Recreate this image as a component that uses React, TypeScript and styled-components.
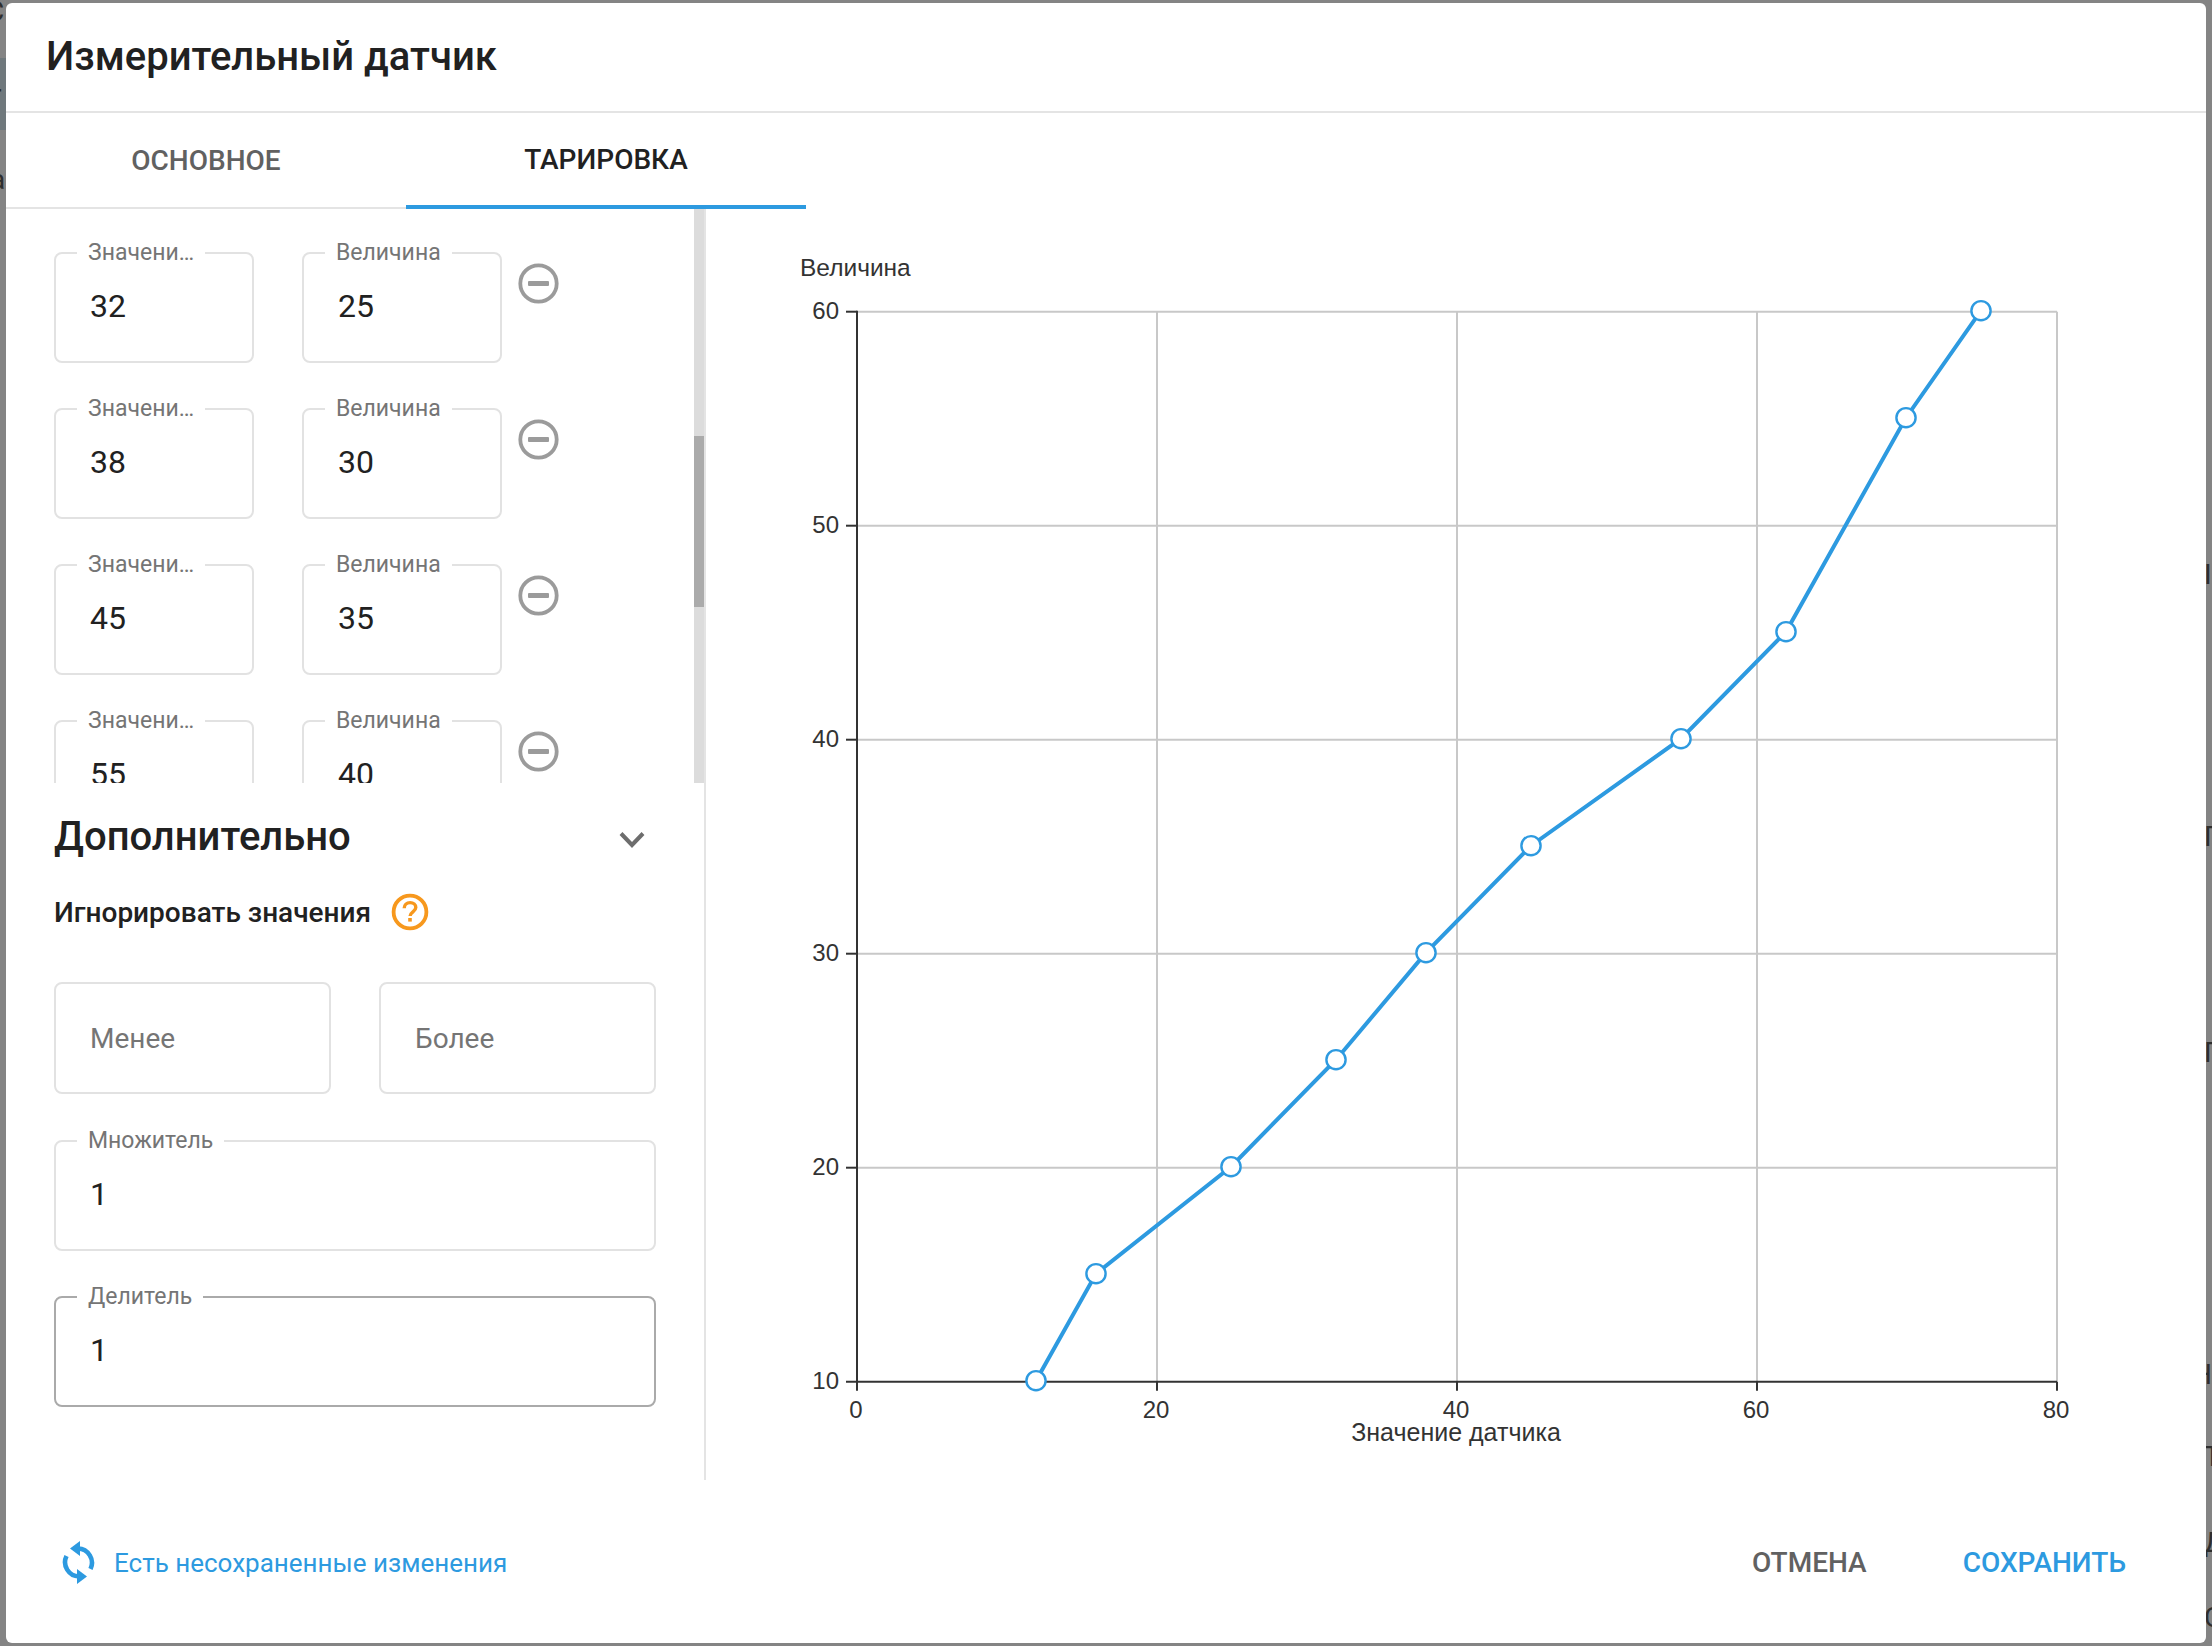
import React from "react";
import styled, { createGlobalStyle } from "styled-components";

const Global = createGlobalStyle`
  html, body { margin: 0; padding: 0; background: #858585; }
  * { box-sizing: border-box; }
  body { font-family: Roboto, "Liberation Sans", sans-serif; }
`;

const Page = styled.div`
  position: relative;
  width: 2212px;
  height: 1646px;
  padding: 3px 6px 3px 6px;
  background: #848484;
  overflow: hidden;
`;
const LeftBand = styled.div`
  position: absolute;
  left: 0;
  top: 58px;
  width: 6px;
  height: 72px;
  background: #6f787c;
`;
const BackGlyph = styled.span<{ $x: number; $y: number }>`
  position: absolute;
  left: ${(p) => p.$x}px;
  top: ${(p) => p.$y}px;
  font-size: 28px;
  line-height: 32px;
  color: #2e2e2e;
`;
const Modal = styled.div`
  position: relative;
  width: 100%;
  height: 100%;
  background: #fff;
  border-radius: 6px;
  display: flex;
  flex-direction: column;
`;
const Header = styled.div`
  height: 110px;
  flex: none;
  display: flex;
  align-items: center;
  padding: 0 0 2px 40px;
  border-bottom: 2px solid #e4e4e4;
`;
const Title = styled.h1`
  margin: 0;
  font-size: 40px;
  font-weight: 500;
  color: #212121;
`;
const Tabs = styled.div`
  height: 96px;
  flex: none;
  display: flex;
  align-items: stretch;
`;
const TabsLeft = styled.div`
  display: flex;
  width: 800px;
  border-bottom: 2px solid #e4e4e4;
`;
const Tab = styled.div<{ $active?: boolean }>`
  width: 400px;
  display: flex;
  align-items: center;
  justify-content: center;
  font-size: 28px;
  font-weight: 500;
  color: ${(p) => (p.$active ? "#212121" : "#616161")};
  margin-bottom: ${(p) => (p.$active ? "-2px" : "0")};
  border-bottom: ${(p) => (p.$active ? "4px solid #2d9ae0" : "none")};
`;
const Body = styled.div`
  flex: none;
  height: 1271px;
  display: flex;
`;
const LeftPanel = styled.div`
  width: 700px;
  height: 1271px;
  flex: none;
  border-right: 2px solid #e4e4e4;
  display: flex;
  flex-direction: column;
`;
const ScrollArea = styled.div`
  height: 574px;
  flex: none;
  position: relative;
  overflow: hidden;
  padding: 32px 0 0 48px;
`;
const Track = styled.div`
  position: absolute;
  top: 0;
  right: 0;
  width: 10px;
  height: 100%;
  background: #dcdcdc;
`;
const Thumb = styled.div`
  position: absolute;
  top: 227px;
  left: 0;
  width: 100%;
  height: 171px;
  background: #ababab;
`;
const Row = styled.div`
  display: flex;
  align-items: flex-start;
  gap: 48px;
  height: 156px;
  flex: none;
`;
const FieldBox = styled.fieldset<{ $w?: number; $dark?: boolean }>`
  margin: 0;
  width: ${(p) => (p.$w ? `${p.$w}px` : "100%")};
  height: 122px;
  padding: 0 0 0 34px;
  border: 2px solid ${(p) => (p.$dark ? "#aaaaaa" : "#e2e2e2")};
  border-radius: 8px;
  display: block;
  flex: none;
`;
const Legend = styled.legend`
  margin-left: -13px;
  padding: 0 11px;
  font-size: 23px;
  line-height: 24px;
  color: #757575;
  height: 24px;
`;
const Value = styled.div`
  font-size: 32px;
  line-height: 38px;
  color: #212121;
  margin-top: 22px;
`;
const RemoveBtn = styled.div`
  margin: 22px 0 0 -32px;
  width: 41px;
  height: 41px;
  flex: none;
  display: flex;
`;
const Extra = styled.div`
  flex: 1;
  padding: 0 0 0 48px;
`;
const ExtraHead = styled.div`
  display: flex;
  align-items: center;
  justify-content: space-between;
  height: 64px;
  margin-top: 21px;
  width: 602px;
`;
const H2 = styled.h2`
  margin: 0;
  font-size: 40px;
  font-weight: 500;
  color: #212121;
`;
const Chevron = styled.div`
  width: 30px;
  height: 24px;
  margin: 10px 9px 0 0;
  display: flex;
`;
const IgnoreRow = styled.div`
  display: flex;
  align-items: center;
  gap: 20px;
  height: 40px;
  margin-top: 24px;
`;
const IgnoreLabel = styled.div`
  font-size: 28px;
  font-weight: 500;
  color: #212121;
`;
const Pair = styled.div`
  display: flex;
  gap: 48px;
  margin-top: 50px;
  width: 602px;
`;
const PlainBox = styled.div`
  width: 277px;
  height: 112px;
  border: 2px solid #e2e2e2;
  border-radius: 8px;
  padding-left: 34px;
  display: flex;
  align-items: center;
  font-size: 28px;
  color: #757575;
`;
const FullField = styled.div<{ $top: number }>`
  width: 602px;
  margin-top: ${(p) => p.$top}px;
`;
const ChartPanel = styled.div`
  flex: 1;
  min-width: 0;
`;
const Footer = styled.div`
  flex: 1;
  display: flex;
  align-items: center;
  justify-content: space-between;
  padding: 2px 80px 0 56px;
`;
const Notice = styled.div`
  display: flex;
  align-items: center;
  gap: 19px;
  font-size: 26px;
  color: #2d9ae0;
`;
const Actions = styled.div`
  display: flex;
  align-items: center;
  gap: 96px;
`;
const Action = styled.div<{ $primary?: boolean }>`
  font-size: 28px;
  font-weight: 500;
  color: ${(p) => (p.$primary ? "#2d9ae0" : "#616161")};
`;
const ChartSvg = styled.svg`
  display: block;
  font-family: "Liberation Sans", Arial, sans-serif;
  font-size: 24px;
  fill: #333;
`;

const MinusCircle = () => (
  <svg width="41" height="41" viewBox="0 0 41 41" fill="none">
    <circle cx="20.5" cy="20.5" r="18.2" stroke="#9b9b9b" strokeWidth="3.8" />
    <rect x="10" y="18" width="21" height="5" rx="1" fill="#9b9b9b" />
  </svg>
);

const Help = () => (
  <svg width="38" height="38" viewBox="0 0 38 38" fill="none">
    <circle cx="19" cy="19" r="16.4" stroke="#f7981d" strokeWidth="3.8" />
    <path d="M13.2 15.2c0-3.4 2.5-5.6 5.9-5.6s5.7 2 5.7 4.9c0 4.2-5.7 4.4-5.7 8.6" stroke="#f7981d" strokeWidth="3.4" />
    <rect x="17.2" y="25" width="3.6" height="3.6" fill="#f7981d" />
  </svg>
);

const Sync = () => (
  <svg width="33" height="43" viewBox="0 0 33 43" fill="none">
    <path d="M16 7.5A14.3 14.3 0 0 1 28.5 28" stroke="#2d9ae0" strokeWidth="4.6" />
    <path d="M8 7.5L18 0v15z" fill="#2d9ae0" />
    <path d="M17 35.5A14.3 14.3 0 0 1 4.5 15" stroke="#2d9ae0" strokeWidth="4.6" />
    <path d="M25 35.5L15 28v15z" fill="#2d9ae0" />
  </svg>
);

const points: [number, number][] = [
  [12, 10], [16, 15], [25, 20], [32, 25], [38, 30], [45, 35], [55, 40], [62, 45], [70, 55], [75, 60],
];
const OX = 857 - 706;
const OY = 1381.7 - 209;
const sx = (v: number) => OX + v * 15;
const sy = (v: number) => OY - (v - 10) * 21.4;

const Chart = () => (
  <ChartSvg width="1500" height="1271" viewBox="0 0 1500 1271">
    {[20, 30, 40, 50, 60].map((v) => (
      <line key={v} x1={sx(0)} x2={sx(80)} y1={sy(v)} y2={sy(v)} stroke="#c8c8c8" strokeWidth="2" />
    ))}
    {[20, 40, 60, 80].map((v) => (
      <line key={v} x1={sx(v)} x2={sx(v)} y1={sy(60)} y2={sy(10)} stroke="#c8c8c8" strokeWidth="2" />
    ))}
    <line x1={sx(0)} x2={sx(0)} y1={sy(60) - 1} y2={sy(10) + 9} stroke="#333" strokeWidth="2" />
    <line x1={sx(0) - 11} x2={sx(80)} y1={sy(10)} y2={sy(10)} stroke="#333" strokeWidth="2" />
    {[20, 30, 40, 50, 60].map((v) => (
      <line key={v} x1={sx(0) - 11} x2={sx(0)} y1={sy(v)} y2={sy(v)} stroke="#333" strokeWidth="2" />
    ))}
    {[20, 40, 60, 80].map((v) => (
      <line key={v} x1={sx(v)} x2={sx(v)} y1={sy(10)} y2={sy(10) + 9} stroke="#333" strokeWidth="2" />
    ))}
    {[10, 20, 30, 40, 50, 60].map((v) => (
      <text key={v} x={sx(0) - 18} y={sy(v) + 7} textAnchor="end">{v}</text>
    ))}
    {[0, 20, 40, 60, 80].map((v) => (
      <text key={v} x={sx(v) - 1} y={sy(10) + 36} textAnchor="middle">{v}</text>
    ))}
    <text x={94} y={67} fontSize="24.5">Величина</text>
    <text x={sx(40) - 1} y={1232} textAnchor="middle" fontSize="25">Значение датчика</text>
    <polyline
      fill="none"
      stroke="#2d9ae0"
      strokeWidth="4"
      points={points.map(([x, y]) => `${sx(x) - 1},${sy(y) - 1}`).join(" ")}
    />
    {points.map(([x, y]) => (
      <circle key={x} cx={sx(x) - 1} cy={sy(y) - 1} r="9.6" fill="#fff" stroke="#2d9ae0" strokeWidth="2.4" />
    ))}
  </ChartSvg>
);

const rows = [
  ["32", "25"],
  ["38", "30"],
  ["45", "35"],
  ["55", "40"],
];

const backGlyphs: [string, number, number][] = [
  ["C", -14, -4],
  ["r", -8, 79],
  ["а", -10, 164],
  ["I", 2204, 559],
  ["П", 2204, 821],
  ["Г", 2204, 1037],
  ["Н", 2192, 1359],
  ["Т", 2204, 1441],
  ["Д", 2204, 1527],
  ["С", 2204, 1602],
];

const Field = ({ label, value, w, dark }: { label: string; value: string; w?: number; dark?: boolean }) => (
  <FieldBox $w={w} $dark={dark}>
    <Legend>{label}</Legend>
    <Value>{value}</Value>
  </FieldBox>
);

export default function App() {
  return (
    <Page>
      <Global />
      <LeftBand />
      {backGlyphs.map(([g, x, y]) => (
        <BackGlyph key={y} $x={x} $y={y}>{g}</BackGlyph>
      ))}
      <Modal>
        <Header>
          <Title>Измерительный датчик</Title>
        </Header>
        <Tabs>
          <TabsLeft>
            <Tab>ОСНОВНОЕ</Tab>
            <Tab $active>ТАРИРОВКА</Tab>
          </TabsLeft>
        </Tabs>
        <Body>
          <LeftPanel>
            <ScrollArea>
              {rows.map(([a, b]) => (
                <Row key={a}>
                  <Field label="Значени…" value={a} w={200} />
                  <Field label="Величина" value={b} w={200} />
                  <RemoveBtn>
                    <MinusCircle />
                  </RemoveBtn>
                </Row>
              ))}
              <Track>
                <Thumb />
              </Track>
            </ScrollArea>
            <Extra>
              <ExtraHead>
                <H2>Дополнительно</H2>
                <Chevron>
                  <svg width="30" height="24" viewBox="0 0 30 24" fill="none">
                    <path d="M4 4.5l11 11.5L26 4.5" stroke="#6d6d6d" strokeWidth="4" />
                  </svg>
                </Chevron>
              </ExtraHead>
              <IgnoreRow>
                <IgnoreLabel>Игнорировать значения</IgnoreLabel>
                <Help />
              </IgnoreRow>
              <Pair>
                <PlainBox>Менее</PlainBox>
                <PlainBox>Более</PlainBox>
              </Pair>
              <FullField $top={35}>
                <Field label="Множитель" value="1" />
              </FullField>
              <FullField $top={34}>
                <Field label="Делитель" value="1" dark />
              </FullField>
            </Extra>
          </LeftPanel>
          <ChartPanel>
            <Chart />
          </ChartPanel>
        </Body>
        <Footer>
          <Notice>
            <Sync />
            Есть несохраненные изменения
          </Notice>
          <Actions>
            <Action>ОТМЕНА</Action>
            <Action $primary>СОХРАНИТЬ</Action>
          </Actions>
        </Footer>
      </Modal>
    </Page>
  );
}
